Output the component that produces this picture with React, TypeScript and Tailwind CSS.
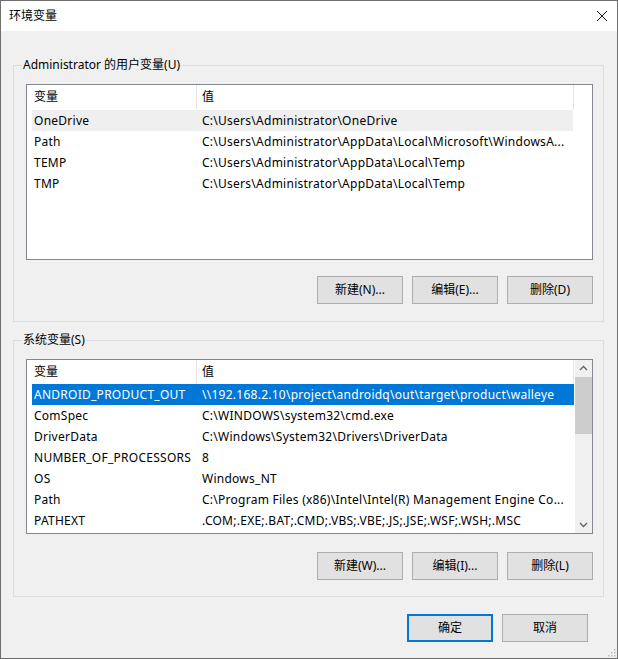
import React from "react";

const font = {
  fontFamily: '"Segoe UI", "Noto Sans", "Noto Sans CJK SC", sans-serif',
};

const userVars: [string, string][] = [
  ["OneDrive", "C:\\Users\\Administrator\\OneDrive"],
  ["Path", "C:\\Users\\Administrator\\AppData\\Local\\Microsoft\\WindowsA..."],
  ["TEMP", "C:\\Users\\Administrator\\AppData\\Local\\Temp"],
  ["TMP", "C:\\Users\\Administrator\\AppData\\Local\\Temp"],
];

const sysVars: [string, string][] = [
  ["ANDROID_PRODUCT_OUT", "\\\\192.168.2.10\\project\\androidq\\out\\target\\product\\walleye"],
  ["ComSpec", "C:\\WINDOWS\\system32\\cmd.exe"],
  ["DriverData", "C:\\Windows\\System32\\Drivers\\DriverData"],
  ["NUMBER_OF_PROCESSORS", "8"],
  ["OS", "Windows_NT"],
  ["Path", "C:\\Program Files (x86)\\Intel\\Intel(R) Management Engine Co..."],
  ["PATHEXT", ".COM;.EXE;.BAT;.CMD;.VBS;.VBE;.JS;.JSE;.WSF;.WSH;.MSC"],
];

function Header() {
  return (
    <div className="flex h-[24px] shrink-0 bg-white text-[12px] leading-[24px] text-black">
      <div className="w-[170px] shrink-0 border-r border-[#e5e5e5] pl-[7px]">变量</div>
      <div className="w-[377px] shrink-0 border-r border-[#e5e5e5] pl-[5px]">值</div>
    </div>
  );
}

function Row({
  name,
  value,
  state,
  width,
}: {
  name: string;
  value: string;
  state: "none" | "inactive" | "active";
  width: string;
}) {
  const bg =
    state === "active" ? "bg-[#0078d7] text-white" : state === "inactive" ? "bg-[#efefef] text-black" : "text-black";
  return (
    <div className={`ml-[5px] flex h-[21px] shrink-0 text-[12px] leading-[21px] tracking-[0.26px] ${width} ${bg}`}>
      <div className="w-[170px] shrink-0 overflow-hidden whitespace-nowrap pl-[2px]">{name}</div>
      <div className="min-w-0 flex-1 overflow-hidden whitespace-nowrap">{value}</div>
    </div>
  );
}

function Btn({ label, primary }: { label: string; primary?: boolean }) {
  return (
    <button
      className={`h-[28px] w-[86px] text-[12px] text-black ${
        primary ? "border-2 border-[#0078d7] bg-[#e1e1e1]" : "border border-[#adadad] bg-[#e1e1e1]"
      }`}
      style={font}
    >
      {label}
    </button>
  );
}

function Group({ label, children }: { label: string; children: React.ReactNode }) {
  return (
    <div className="relative border border-[#dcdcdc]">
      <div className="absolute left-[8px] top-[-9px] bg-[#f0f0f0] px-[1px] text-[12px] leading-[16px] text-black">
        {label}
      </div>
      {children}
    </div>
  );
}

function Chevron({ up }: { up?: boolean }) {
  return (
    <svg width="17" height="17" viewBox="0 0 17 17">
      <path
        d={up ? "M5 10 L8.5 6.5 L12 10" : "M5 7 L8.5 10.5 L12 7"}
        fill="none"
        stroke="#606060"
        strokeWidth="1.3"
      />
    </svg>
  );
}

export default function App() {
  return (
    <div
      className="relative flex h-[659px] w-[618px] flex-col border border-[#6f6f6f] bg-[#f0f0f0]"
      style={font}
    >
      {/* Title bar */}
      <div className="flex h-[30px] shrink-0 items-center justify-between bg-white pl-[8px] pr-[9px]">
        <span className="text-[12px] text-black">环境变量</span>
        <svg width="12" height="12" viewBox="0 0 12 12">
          <path d="M1 1 L11 11 M11 1 L1 11" stroke="#111" strokeWidth="1" fill="none" />
        </svg>
      </div>

      <div className="flex flex-col pl-[12px] pr-[13px] pt-[34px]">
        <Group label="Administrator 的用户变量(U)">
          <div className="flex flex-col pb-[17px] pl-[12px] pr-[10px] pt-[18px]">
            <div className="flex h-[176px] flex-col overflow-hidden border border-[#828790] bg-white">
              <Header />
              <div className="h-[1px]" />
              {userVars.map(([n, v], i) => (
                <Row key={n} name={n} value={v} state={i === 0 ? "inactive" : "none"} width="w-[541px]" />
              ))}
            </div>
            <div className="mt-[16px] flex justify-end gap-[9px]">
              <Btn label="新建(N)..." />
              <Btn label="编辑(E)..." />
              <Btn label="删除(D)" />
            </div>
          </div>
        </Group>

        <div className="h-[18px]" />

        <Group label="系统变量(S)">
          <div className="flex flex-col pb-[16px] pl-[12px] pr-[10px] pt-[18px]">
            <div className="flex h-[175px] overflow-hidden border border-[#828790] bg-white">
              <div className="flex min-w-0 flex-1 flex-col">
                <Header />
                {sysVars.map(([n, v], i) => (
                  <Row key={n} name={n} value={v} state={i === 0 ? "active" : "none"} width="w-[542px]" />
                ))}
              </div>
              <div className="flex w-[17px] shrink-0 flex-col bg-[#f0f0f0]">
                <Chevron up />
                <div className="h-[57px] w-[17px] bg-[#cdcdcd]" />
                <div className="flex-1" />
                <Chevron />
              </div>
            </div>
            <div className="mt-[18px] flex justify-end gap-[9px]">
              <Btn label="新建(W)..." />
              <Btn label="编辑(I)..." />
              <Btn label="删除(L)" />
            </div>
          </div>
        </Group>

        <div className="mt-[17px] flex justify-end gap-[9px] pr-[16px]">
          <Btn label="确定" primary />
          <Btn label="取消" />
        </div>
      </div>

      <svg className="absolute bottom-[1px] right-[1px]" width="10" height="10" viewBox="0 0 10 10">
        {[
          [8, 2],
          [5, 5],
          [8, 5],
          [2, 8],
          [5, 8],
          [8, 8],
        ].map(([x, y]) => (
          <rect key={`${x}-${y}`} x={x} y={y} width="1.5" height="1.5" fill="#bcbcbc" />
        ))}
      </svg>
    </div>
  );
}
